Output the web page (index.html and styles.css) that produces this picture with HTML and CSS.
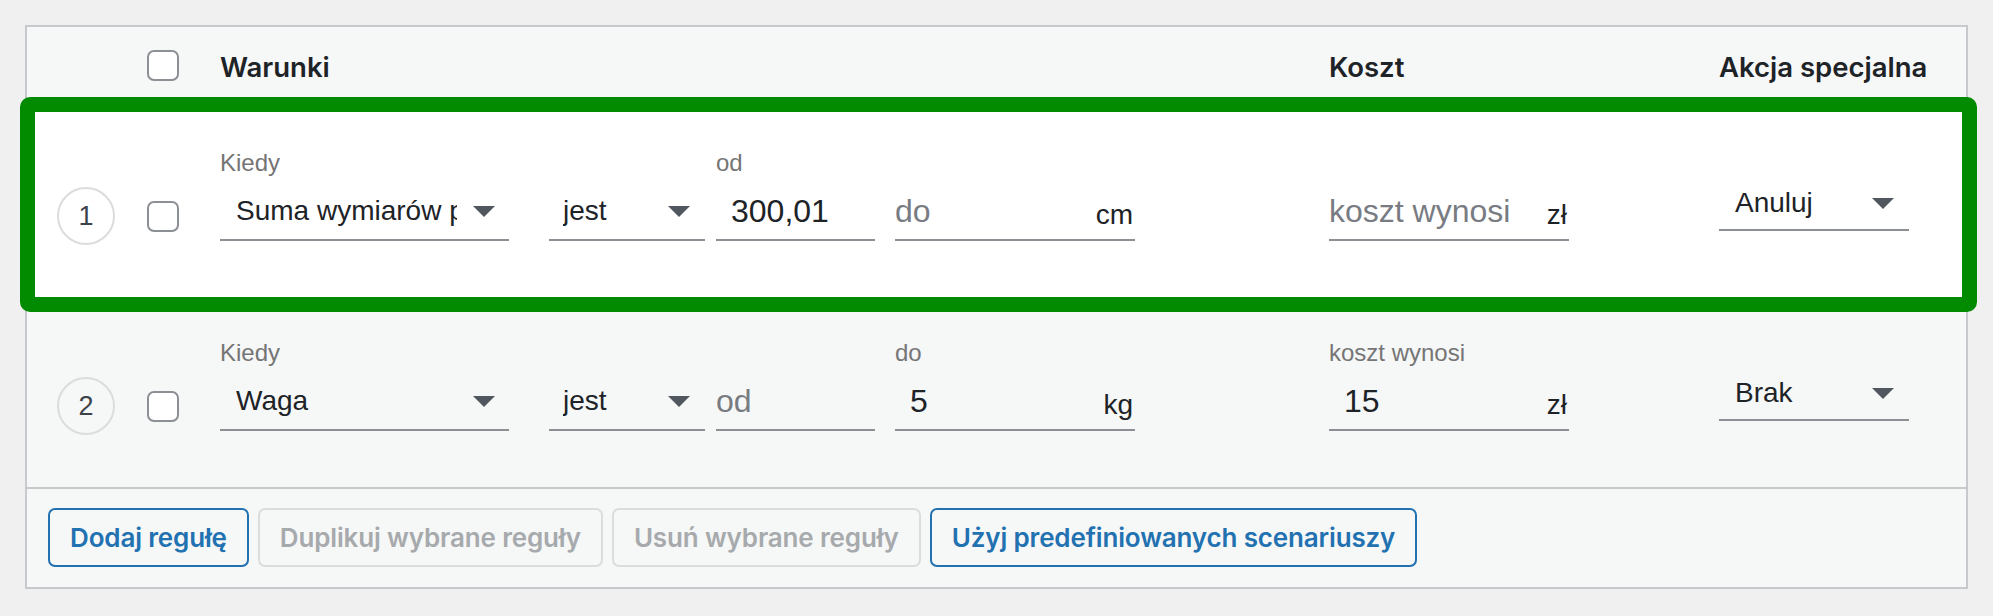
FILE: index.html
```html
<!DOCTYPE html>
<html lang="pl">
<head>
<meta charset="utf-8">
<title>Reguły</title>
<link rel="stylesheet" href="styles.css">
</head>
<body>
<div class="page">
  <div class="panel">
    <div class="head">
      <span class="cb cb--head"></span>
      <div class="h h-cond">Warunki</div>
      <div class="h h-cost">Koszt</div>
      <div class="h h-act">Akcja specjalna</div>
    </div>

    <div class="rule rule--active">
      <div class="num">1</div>
      <span class="cb"></span>
      <div class="field f-when">
        <div class="lbl">Kiedy</div>
        <div class="ctl sel"><span class="sel-text">Suma wymiarów paczki</span><svg class="arrow" viewBox="0 0 22 11"><polygon points="0,0 22,0 11,11"/></svg></div>
      </div>
      <div class="field f-is">
        <div class="lbl"></div>
        <div class="ctl sel sel--short"><span class="sel-text">jest</span><svg class="arrow" viewBox="0 0 22 11"><polygon points="0,0 22,0 11,11"/></svg></div>
      </div>
      <div class="field f-from">
        <div class="lbl">od</div>
        <div class="ctl inp"><span class="val">300,01</span></div>
      </div>
      <div class="field f-to">
        <div class="lbl"></div>
        <div class="ctl inp"><span class="ph">do</span><span class="unit">cm</span></div>
      </div>
      <div class="field f-cost">
        <div class="lbl"></div>
        <div class="ctl inp"><span class="ph">koszt wynosi</span><span class="unit">zł</span></div>
      </div>
      <div class="field f-act">
        <div class="ctl sel sel--act"><span class="sel-text">Anuluj</span><svg class="arrow" viewBox="0 0 22 11"><polygon points="0,0 22,0 11,11"/></svg></div>
      </div>
      <div class="hl"></div>
    </div>

    <div class="rule">
      <div class="num">2</div>
      <span class="cb"></span>
      <div class="field f-when">
        <div class="lbl">Kiedy</div>
        <div class="ctl sel"><span class="sel-text">Waga</span><svg class="arrow" viewBox="0 0 22 11"><polygon points="0,0 22,0 11,11"/></svg></div>
      </div>
      <div class="field f-is">
        <div class="lbl"></div>
        <div class="ctl sel sel--short"><span class="sel-text">jest</span><svg class="arrow" viewBox="0 0 22 11"><polygon points="0,0 22,0 11,11"/></svg></div>
      </div>
      <div class="field f-from">
        <div class="lbl"></div>
        <div class="ctl inp"><span class="ph">od</span></div>
      </div>
      <div class="field f-to">
        <div class="lbl">do</div>
        <div class="ctl inp"><span class="val">5</span><span class="unit">kg</span></div>
      </div>
      <div class="field f-cost">
        <div class="lbl">koszt wynosi</div>
        <div class="ctl inp"><span class="val">15</span><span class="unit">zł</span></div>
      </div>
      <div class="field f-act">
        <div class="ctl sel sel--act"><span class="sel-text">Brak</span><svg class="arrow" viewBox="0 0 22 11"><polygon points="0,0 22,0 11,11"/></svg></div>
      </div>
    </div>

    <div class="foot">
      <button class="btn btn--primary">Dodaj regułę</button>
      <button class="btn btn--disabled">Duplikuj wybrane reguły</button>
      <button class="btn btn--disabled">Usuń wybrane reguły</button>
      <button class="btn btn--primary">Użyj predefiniowanych scenariuszy</button>
    </div>
  </div>
</div>
</body>
</html>
```

FILE: styles.css
```css
* { box-sizing: border-box; }

body {
  margin: 0;
  background: #f0f0f1;
  font-family: "Liberation Sans", Arial, sans-serif;
  color: #1d2327;
}

.page {
  padding: 25px 25px 0 25px;
}

.panel {
  background: #f6f7f7;
  border: 2px solid #c8c9cc;
}

/* header */
.head {
  display: flex;
  align-items: center;
  height: 80px;
  padding-left: 120px;
}

.h {
  font-family: Inter, "Liberation Sans", sans-serif;
  font-weight: 600;
  font-size: 27.5px;
  color: #1d2327;
}

.h-cond { margin-left: 41px; width: 1109px; }
.h-cost { width: 390px; }
.h-act { flex: 1; }

/* checkbox */
.cb {
  display: block;
  width: 32px;
  height: 31px;
  border: 2px solid #8c8f94;
  border-radius: 7px;
  background: #fff;
  flex: none;
}

.cb--head { margin-top: -4px; }

/* rule rows */
.rule {
  position: relative;
  display: flex;
  align-items: flex-start;
  height: 190px;
  padding-left: 30px;
}

.rule--active { background: #fff; }

.num {
  flex: none;
  width: 58px;
  height: 58px;
  margin-top: 80px;
  border: 2px solid #dcdcde;
  border-radius: 50%;
  display: flex;
  align-items: center;
  justify-content: center;
  font-size: 27px;
  color: #3c434a;
}

.rule .cb {
  margin-left: 32px;
  margin-top: 94px;
}

.field {
  flex: none;
  margin-top: 44px;
}

.lbl {
  height: 24px;
  line-height: 24px;
  font-size: 24px;
  color: #757575;
  margin-bottom: 8px;
  white-space: nowrap;
}

.ctl {
  display: flex;
  align-items: center;
  height: 58px;
  border-bottom: 2px solid #8c8f94;
  white-space: nowrap;
}

.sel {
  padding-left: 16px;
  padding-right: 14px;
  font-size: 28px;
}

.sel--short { padding-left: 14px; padding-right: 15px; }

.sel-text {
  flex: 1;
  overflow: hidden;
  min-width: 0;
}

.arrow {
  flex: none;
  width: 22px;
  height: 11px;
  margin-left: 16px;
  fill: #50575e;
}

.inp {
  font-size: 32px;
  padding-right: 2px;
}

.val { padding-left: 15px; color: #1d2327; }
.ph { color: #787c82; }

.unit {
  margin-left: auto;
  font-size: 28px;
  color: #1d2327;
  margin-top: 8px;
}

.f-when { margin-left: 41px; width: 289px; }
.f-is { margin-left: 40px; width: 156px; }
.f-from { margin-left: 11px; width: 159px; }
.f-to { margin-left: 20px; width: 240px; }
.f-cost { margin-left: 194px; width: 240px; }
.f-act { margin-left: 150px; width: 190px; margin-top: 70px; }
.sel--act { height: 54px; padding-right: 15px; }

/* highlight frame */
.hl {
  position: absolute;
  top: -10px;
  bottom: -15px;
  left: -7px;
  right: -11px;
  border: 15px solid #028a00;
  border-radius: 10px;
  pointer-events: none;
}

/* footer */
.foot {
  display: flex;
  gap: 9px;
  border-top: 2px solid #c8c9cc;
  padding: 19px 21px 20px;
}

.btn {
  height: 59px;
  padding: 0 20px;
  border: 2px solid #2271b1;
  border-radius: 7px;
  background: #f6f7f7;
  color: #2271b1;
  font-family: Inter, "Liberation Sans", sans-serif;
  font-weight: 600;
  font-size: 26px;
  letter-spacing: -0.15px;
}

.btn--disabled {
  border-color: #dcdcde;
  color: #a7aaad;
}
```
